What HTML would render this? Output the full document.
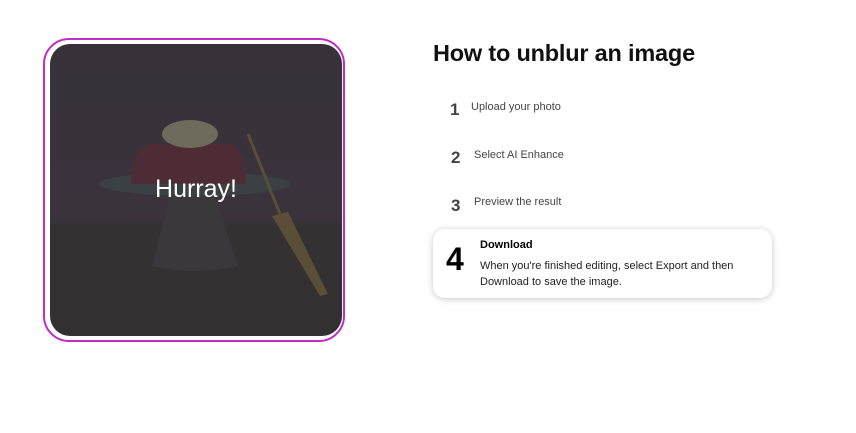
<!DOCTYPE html>
<html><head><style>
body{margin:0;width:856px;height:433px;background:#fff;font-family:"Liberation Sans",sans-serif;position:relative;overflow:hidden}
.frame{position:absolute;left:43px;top:38px;width:302px;height:304px;border:2px solid #c02cc4;border-radius:26px;box-sizing:border-box}
.img{position:absolute;left:50px;top:44px;width:292px;height:292px;border-radius:20px;background:linear-gradient(#38313a 0%,#3a333c 60%,#343133 62%,#333032 100%);overflow:hidden}
.t{position:absolute;color:#fff;font-size:25px;left:0;width:292px;text-align:center;top:131px}
h1{position:absolute;left:433px;top:40px;margin:0;font-size:23.5px;font-weight:bold;color:#111;letter-spacing:-0.2px}
.n{position:absolute;font-size:17px;color:#444;font-weight:bold}
.s{position:absolute;font-size:11px;color:#444}
.card{position:absolute;left:433px;top:229px;width:339px;height:69px;border-radius:12px;background:#fff;box-shadow:0 1px 7px rgba(0,0,0,.22)}
</style></head><body>
<div class="frame"></div>
<div class="img">
<svg width="292" height="292" style="position:absolute;left:0;top:0">
<ellipse cx="145" cy="140" rx="96" ry="12" fill="#3a4043"/>
<path d="M81 140 Q82 105 100 100 L180 100 Q195 105 196 140 Z" fill="#4e2c35"/>
<ellipse cx="140" cy="90" rx="28" ry="14" fill="#6e6a5c"/>
<path d="M120 152 L165 152 L188 222 Q145 232 102 222 Z" fill="#3a383b"/>
<path d="M198 90 L230 170" stroke="#5a4e36" stroke-width="3"/>
<path d="M222 172 L238 168 L278 250 L270 252 Z" fill="#5a4e36"/>
</svg>
<div class="t">Hurray!</div>
</div>
<h1>How to unblur an image</h1>
<div class="n" style="left:450px;top:100px">1</div><div class="s" style="left:471px;top:101px">Upload your photo</div>
<div class="n" style="left:451px;top:148px">2</div><div class="s" style="left:474px;top:149px">Select AI Enhance</div>
<div class="n" style="left:451px;top:196px">3</div><div class="s" style="left:474px;top:196px">Preview the result</div>
<div class="card">
<div style="position:absolute;left:13px;top:12px;font-size:32px;font-weight:bold;color:#000">4</div>
<div style="position:absolute;left:47px;top:10px;font-size:11px;color:#000;font-weight:bold">Download</div>
<div style="position:absolute;left:47px;top:29px;font-size:11px;color:#222;line-height:16px;width:285px">When you're finished editing, select Export and then Download to save the image.</div>
</div>
</body></html>
